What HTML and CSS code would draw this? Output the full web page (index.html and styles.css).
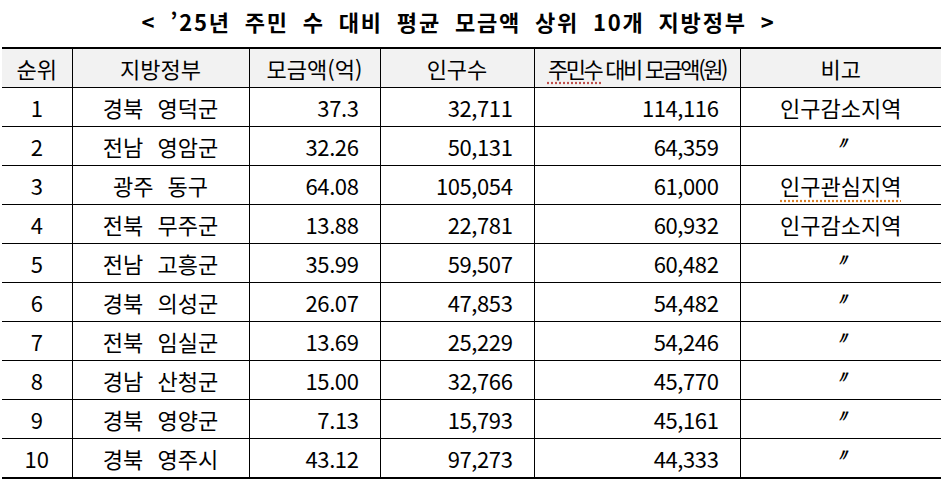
FILE: index.html
```html
<!DOCTYPE html>
<html lang="ko">
<head>
<meta charset="utf-8">
<title>'25년 주민 수 대비 평균 모금액 상위 10개 지방정부</title>
<link rel="stylesheet" href="styles.css">
</head>
<body>
<h1 class="title">&lt; ’25년 주민 수 대비 평균 모금액 상위 10개 지방정부 &gt;</h1>
<table class="rank">
  <colgroup>
    <col class="c-rank"><col class="c-gov"><col class="c-amt"><col class="c-pop"><col class="c-per"><col class="c-note">
  </colgroup>
  <thead>
    <tr>
      <th>순위</th>
      <th>지방정부</th>
      <th>모금액(억)</th>
      <th>인구수</th>
      <th class="squeeze"><span class="spell">주민수</span> 대비 모금액(원)</th>
      <th>비고</th>
    </tr>
  </thead>
  <tbody>
    <tr><td>1</td><td class="gov">경북 영덕군</td><td class="num">37.3</td><td class="num">32,711</td><td class="num">114,116</td><td>인구감소지역</td></tr>
    <tr><td>2</td><td class="gov">전남 영암군</td><td class="num">32.26</td><td class="num">50,131</td><td class="num">64,359</td><td><span class="ditto">〃</span></td></tr>
    <tr><td>3</td><td class="gov">광주 동구</td><td class="num">64.08</td><td class="num">105,054</td><td class="num">61,000</td><td><span class="spell2">인구관심지역</span></td></tr>
    <tr><td>4</td><td class="gov">전북 무주군</td><td class="num">13.88</td><td class="num">22,781</td><td class="num">60,932</td><td>인구감소지역</td></tr>
    <tr><td>5</td><td class="gov">전남 고흥군</td><td class="num">35.99</td><td class="num">59,507</td><td class="num">60,482</td><td><span class="ditto">〃</span></td></tr>
    <tr><td>6</td><td class="gov">경북 의성군</td><td class="num">26.07</td><td class="num">47,853</td><td class="num">54,482</td><td><span class="ditto">〃</span></td></tr>
    <tr><td>7</td><td class="gov">전북 임실군</td><td class="num">13.69</td><td class="num">25,229</td><td class="num">54,246</td><td><span class="ditto">〃</span></td></tr>
    <tr><td>8</td><td class="gov">경남 산청군</td><td class="num">15.00</td><td class="num">32,766</td><td class="num">45,770</td><td><span class="ditto">〃</span></td></tr>
    <tr><td>9</td><td class="gov">경북 영양군</td><td class="num">7.13</td><td class="num">15,793</td><td class="num">45,161</td><td><span class="ditto">〃</span></td></tr>
    <tr><td>10</td><td class="gov">경북 영주시</td><td class="num">43.12</td><td class="num">97,273</td><td class="num">44,333</td><td><span class="ditto">〃</span></td></tr>
  </tbody>
</table>
</body>
</html>
```
FILE: styles.css
```css
html, body {
  margin: 0;
  padding: 0;
  background: #ffffff;
}
body {
  padding: 0 3px 0 2px;
  font-family: "Noto Sans CJK KR", "Noto Sans", sans-serif;
  color: #000;
}
.title {
  margin: 0;
  height: 47px;
  line-height: 42px;
  font-size: 22px;
  font-weight: 700;
  text-align: center;
  letter-spacing: 1.8px;
  word-spacing: 6px;
  padding-right: 26px;
}
.rank {
  width: 939px;
  border-collapse: collapse;
  table-layout: fixed;
  font-size: 22px;
}
.c-rank { width: 70px; }
.c-gov { width: 177px; }
.c-amt { width: 131px; }
.c-pop { width: 154px; }
.c-per { width: 206px; }
.c-note { width: 201px; }
.rank th, .rank td {
  height: 38px;
  padding: 0;
  border: 1px solid #000;
  text-align: center;
  vertical-align: middle;
  line-height: 24px;
  font-weight: 400;
  white-space: pre;
}
.rank tr > :first-child { border-left: none; }
.rank tr > :last-child { border-right: none; }
.rank thead th {
  background: #f2f2f2;
  border-top: 2px solid #000;
}
.rank tbody tr:last-child td { border-bottom: 2px solid #000; }
.rank td.num {
  text-align: right;
  padding-right: 21px;
  letter-spacing: -0.4px;
}
.rank td.gov { word-spacing: 8px; }
.squeeze {
  letter-spacing: -2.4px;
}
.spell {
  text-decoration: underline dotted #c0504d;
  text-underline-offset: 4px;
}
.spell2 {
  text-decoration: underline dotted #d9822b;
  text-underline-offset: 5px;
}
.ditto {
  font-family: "DejaVu Sans", sans-serif;
  font-size: 17px;
  font-weight: 700;
  font-style: italic;
  position: relative;
  top: -5px;
  left: 2px;
}
```
